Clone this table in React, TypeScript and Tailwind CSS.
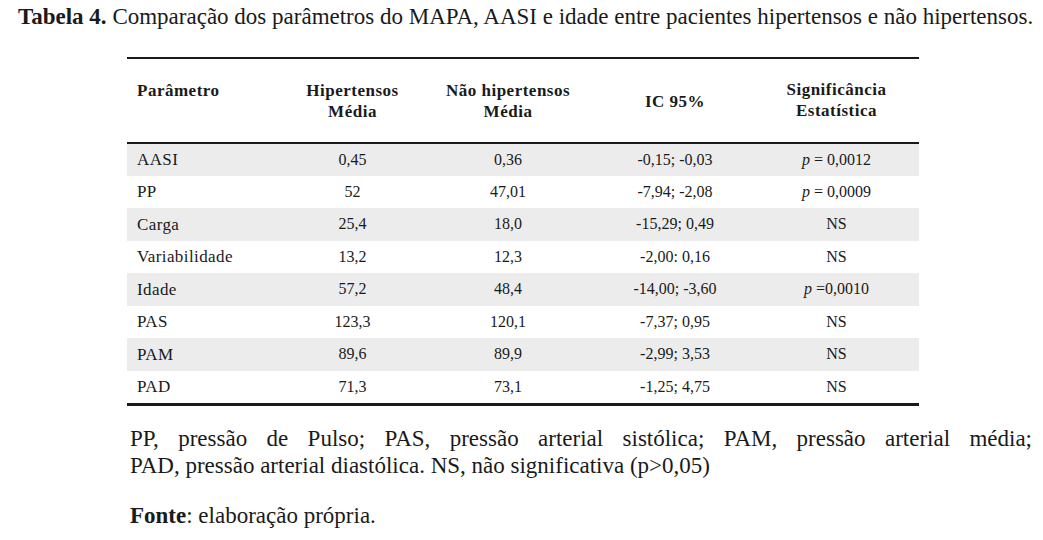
const rows = [
  { p: "AASI", h: "0,45", n: "0,36", ic: "-0,15; -0,03", s: "= 0,0012", pv: true },
  { p: "PP", h: "52", n: "47,01", ic: "-7,94; -2,08", s: "= 0,0009", pv: true },
  { p: "Carga", h: "25,4", n: "18,0", ic: "-15,29; 0,49", s: "NS" },
  { p: "Variabilidade", h: "13,2", n: "12,3", ic: "-2,00: 0,16", s: "NS" },
  { p: "Idade", h: "57,2", n: "48,4", ic: "-14,00; -3,60", s: "=0,0010", pv: true },
  { p: "PAS", h: "123,3", n: "120,1", ic: "-7,37; 0,95", s: "NS" },
  { p: "PAM", h: "89,6", n: "89,9", ic: "-2,99; 3,53", s: "NS" },
  { p: "PAD", h: "71,3", n: "73,1", ic: "-1,25; 4,75", s: "NS" },
];

export default function App() {
  return (
    <div className="w-[1043px] h-[540px] bg-white text-[#1a1a1a] font-['Liberation_Serif',serif] overflow-hidden">
      <h1 className="pt-[4px] pl-[18px] text-[23px] leading-[26px] whitespace-nowrap">
        <span className="font-bold">Tabela 4.</span> Comparação dos parâmetros do MAPA, AASI e idade entre pacientes hipertensos e não hipertensos.
      </h1>

      <div className="ml-[127px] mt-[27px] w-[792px]">
        <table className="w-full border-collapse table-fixed">
          <colgroup>
            <col className="w-[158px]" />
            <col className="w-[135px]" />
            <col className="w-[176px]" />
            <col className="w-[158px]" />
            <col className="w-[165px]" />
          </colgroup>
          <thead>
            <tr className="h-[85px] border-t-2 border-b-2 border-[#1a1a1a] text-[17px] leading-[21px] tracking-[0.5px]">
              <th className="text-left align-top pt-[21px] pl-[10px] font-bold">Parâmetro</th>
              <th className="align-top pt-[21px] font-bold">Hipertensos<br />Média</th>
              <th className="align-top pt-[21px] font-bold">Não hipertensos<br />Média</th>
              <th className="align-middle font-bold pt-[1px]">IC 95%</th>
              <th className="align-top pt-[20px] font-bold">Significância<br />Estatística</th>
            </tr>
          </thead>
          <tbody className="text-[16px]">
            {rows.map((r, i) => (
              <tr key={r.p} className={i % 2 === 0 ? "h-[32.5px] bg-[#ececec]" : "h-[32.5px] bg-white"}>
                <td className="pl-[10px] text-[17px] tracking-[0.4px]">{r.p}</td>
                <td className="text-center">{r.h}</td>
                <td className="text-center">{r.n}</td>
                <td className="text-center">{r.ic}</td>
                <td className="text-center">
                  {r.pv ? (
                    <>
                      <i>p</i> {r.s}
                    </>
                  ) : (
                    r.s
                  )}
                </td>
              </tr>
            ))}
          </tbody>
        </table>
        <div className="h-[3px] bg-[#1a1a1a]" />
      </div>

      <div className="ml-[130px] mr-[11px] mt-[19px] text-[23px] leading-[27px]">
        <p className="text-justify [text-align-last:justify]">
          PP, pressão de Pulso; PAS, pressão arterial sistólica; PAM, pressão arterial média;
        </p>
        <p>PAD, pressão arterial diastólica. NS, não significativa (p&gt;0,05)</p>
      </div>
      <p className="ml-[130px] mt-[23px] text-[23px] leading-[27px]">
        <span className="font-bold">Fonte</span>: elaboração própria.
      </p>
    </div>
  );
}
